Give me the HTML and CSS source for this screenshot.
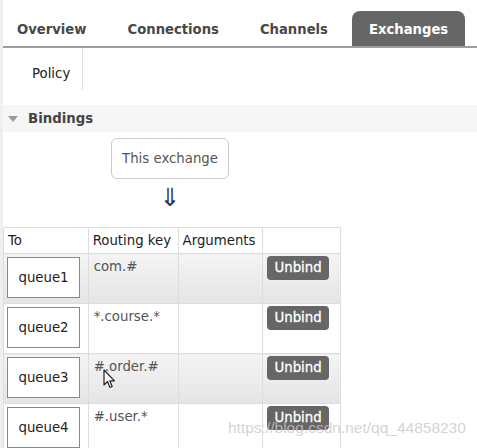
FILE: index.html
```html
<!DOCTYPE html>
<html>
<head>
<meta charset="utf-8">
<link rel="stylesheet" href="styles.css">
</head>
<body>
<div class="page">
  <ul class="tabs">
    <li class="tab">Overview</li>
    <li class="tab">Connections</li>
    <li class="tab">Channels</li>
    <li class="tab active">Exchanges</li>
  </ul>
  <div class="subnav"><span class="subitem">Policy</span></div>
  <div class="section-h"><span class="tri"></span><span class="section-title">Bindings</span></div>
  <div class="diagram">
    <div class="exch-box">This exchange</div>
    <div class="arrow">⇓</div>
  </div>
  <table class="bindings">
    <thead>
      <tr><th class="c-to">To</th><th class="c-rk">Routing key</th><th class="c-args">Arguments</th><th class="c-act"></th></tr>
    </thead>
    <tbody>
      <tr class="alt"><td><span class="queue">queue1</span></td><td>com.#</td><td></td><td><span class="btn">Unbind</span></td></tr>
      <tr><td><span class="queue">queue2</span></td><td>*.course.*</td><td></td><td><span class="btn">Unbind</span></td></tr>
      <tr class="alt"><td><span class="queue">queue3</span></td><td>#.order.#</td><td></td><td><span class="btn">Unbind</span></td></tr>
      <tr><td><span class="queue">queue4</span></td><td>#.user.*</td><td></td><td><span class="btn">Unbind</span></td></tr>
    </tbody>
  </table>
  <svg class="cursor" width="13" height="20" viewBox="0 0 13 20"><path d="M1 1 L1 16 L4.5 12.5 L7 18.5 L9.2 17.5 L6.8 11.8 L11.5 11.8 Z" fill="#fff" stroke="#222" stroke-width="1.2" stroke-linejoin="round"/></svg>
  <div class="watermark">https://blog.csdn.net/qq_44858230</div>
</div>
</body>
</html>
```
FILE: styles.css
```css
html, body {
  margin: 0;
  padding: 0;
  background: #fff;
}
body {
  font-family: "DejaVu Sans", Verdana, sans-serif;
  font-size: 13.3px;
  color: #333;
}
.page {
  position: relative;
  width: 477px;
  height: 448px;
  overflow: hidden;
  border-left: 3px solid #efefef;
  box-sizing: border-box;
}
.tabs {
  list-style: none;
  margin: 0 0 0 -3px;
  padding: 11px 0 0 0;
  display: flex;
  gap: 7px;
  border-bottom: 2px solid #9e9e9e;
  height: 35px;
}
.tab {
  padding: 0 17px;
  height: 35px;
  line-height: 37px;
  font-weight: bold;
  font-size: 13.2px;
  color: #484848;
  border-radius: 8px 8px 0 0;
}
.tab.active {
  background: #666;
  color: #fff;
}
.subnav {
  height: 42px;
  display: flex;
  padding-left: 17px;
}
.subitem {
  padding: 0 12px;
  line-height: 51px;
  border-right: 1px solid #ddd;
  color: #222;
  height: 42px;
}
.section-h {
  margin-top: 15px;
  height: 27px;
  background: #f6f6f6;
  display: flex;
  align-items: center;
}
.tri {
  width: 0;
  height: 0;
  border-left: 5px solid transparent;
  border-right: 5px solid transparent;
  border-top: 6px solid #999;
  margin-left: 5px;
  margin-right: 10px;
  margin-top: 1px;
}
.section-title {
  font-weight: bold;
  color: #444;
}
.diagram {
  width: 120px;
  margin-left: 107px;
  margin-top: 6px;
  display: flex;
  flex-direction: column;
  align-items: center;
}
.exch-box {
  width: 116px;
  height: 39px;
  border: 1px solid #ccc;
  border-radius: 6px;
  display: flex;
  align-items: center;
  justify-content: center;
  color: #555;
}
.arrow {
  font-size: 25px;
  line-height: 38px;
  height: 48px;
  color: #333;
}
.bindings {
  border-collapse: collapse;
  width: 338px;
}
.bindings th, .bindings td {
  border: 1px solid #ddd;
  padding: 0;
}
.bindings th {
  height: 25px;
  text-align: left;
  font-weight: normal;
  color: #222;
  padding: 0 5px 0 4px;
  white-space: nowrap;
}
.c-to { width: 75px; }
.c-rk { width: 80px; }
.c-args { width: 75px; }
.c-act { width: 68px; }
.bindings td {
  vertical-align: top;
  height: 44px;
  color: #555;
  padding: 5px 5px 0 5px;
}
.bindings td:first-child {
  padding: 2px 0 0 3px;
}
.bindings tr.alt td {
  background: linear-gradient(#f4f4f4, #e5e5e5);
}
.queue {
  display: flex;
  align-items: center;
  justify-content: center;
  width: 71px;
  height: 39px;
  border: 1px solid #888;
  background: #fff;
  color: #222;
  margin-top: 1px;
}
.bindings td:last-child {
  padding: 2px 0 0 4px;
}
.btn {
  display: inline-block;
  background: #666;
  color: #fff;
  border-radius: 4px;
  padding: 0 7px;
  height: 24px;
  line-height: 24px;
  font-size: 13.3px;
  -webkit-text-stroke: 0.3px #fff;
}
.cursor {
  position: absolute;
  left: 100px;
  top: 369px;
}
.watermark {
  position: absolute;
  left: 225px;
  top: 419px;
  font-family: "Liberation Sans", Arial, sans-serif;
  font-size: 15.5px;
  color: rgba(200, 200, 200, 0.8);
  white-space: nowrap;
}
```
